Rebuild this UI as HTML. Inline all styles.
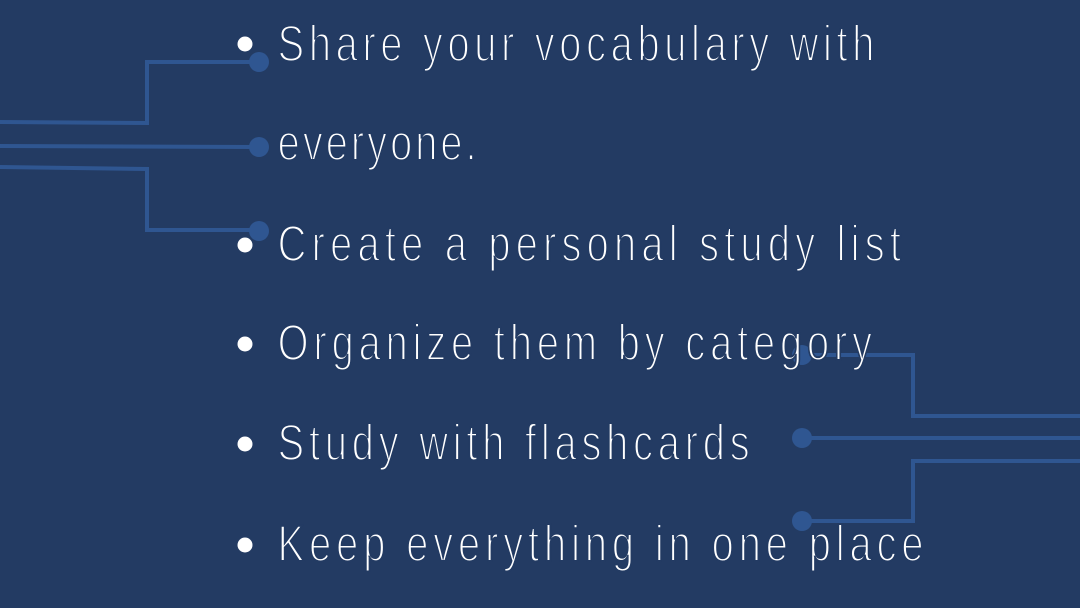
<!DOCTYPE html>
<html><head><meta charset="utf-8"><style>
html,body{margin:0;padding:0;background:#233b63;width:1080px;height:608px;overflow:hidden}
svg{display:block}
text{font-family:"Liberation Sans",sans-serif;font-size:51px;fill:#fff;stroke:#233b63;stroke-width:2px}
</style></head><body>
<svg width="1080" height="608" viewBox="0 0 1080 608">
<rect width="1080" height="608" fill="#233b63"/>
<g stroke="#2f5691" stroke-width="4" fill="none">
<polyline points="0,122 147,123 147,62 259,62"/>
<polyline points="0,146 259,147"/>
<polyline points="0,167 147,169 147,230 259,230"/>
<polyline points="802,355 913,355 913,416 1080,416"/>
<polyline points="802,438 1080,438"/>
<polyline points="802,521 913,521 913,461 1080,461"/>
</g>
<g fill="#2f5691">
<circle cx="259" cy="62" r="10"/><circle cx="259" cy="147" r="10"/><circle cx="259" cy="231" r="10"/>
<circle cx="802" cy="355" r="10"/><circle cx="802" cy="438" r="10"/><circle cx="802" cy="521" r="10"/>
</g>
<g fill="#fff">
<circle cx="245" cy="44" r="7.5"/><circle cx="245" cy="245" r="7.5"/><circle cx="245" cy="344" r="7.5"/><circle cx="245" cy="444" r="7.5"/><circle cx="245" cy="545" r="7.5"/>
</g>
<g transform="scale(0.78,1)">
<text x="356" y="61" textLength="765" lengthAdjust="spacing">Share your vocabulary with</text>
<text x="356" y="160" textLength="255" lengthAdjust="spacing">everyone.</text>
<text x="356" y="261" textLength="799" lengthAdjust="spacing">Create a personal study list</text>
<text x="356" y="360" textLength="762" lengthAdjust="spacing">Organize them by category</text>
<text x="356" y="460" textLength="605" lengthAdjust="spacing">Study with flashcards</text>
<text x="356" y="561" textLength="828" lengthAdjust="spacing">Keep everything in one place</text>
</g>
</svg>
</body></html>
